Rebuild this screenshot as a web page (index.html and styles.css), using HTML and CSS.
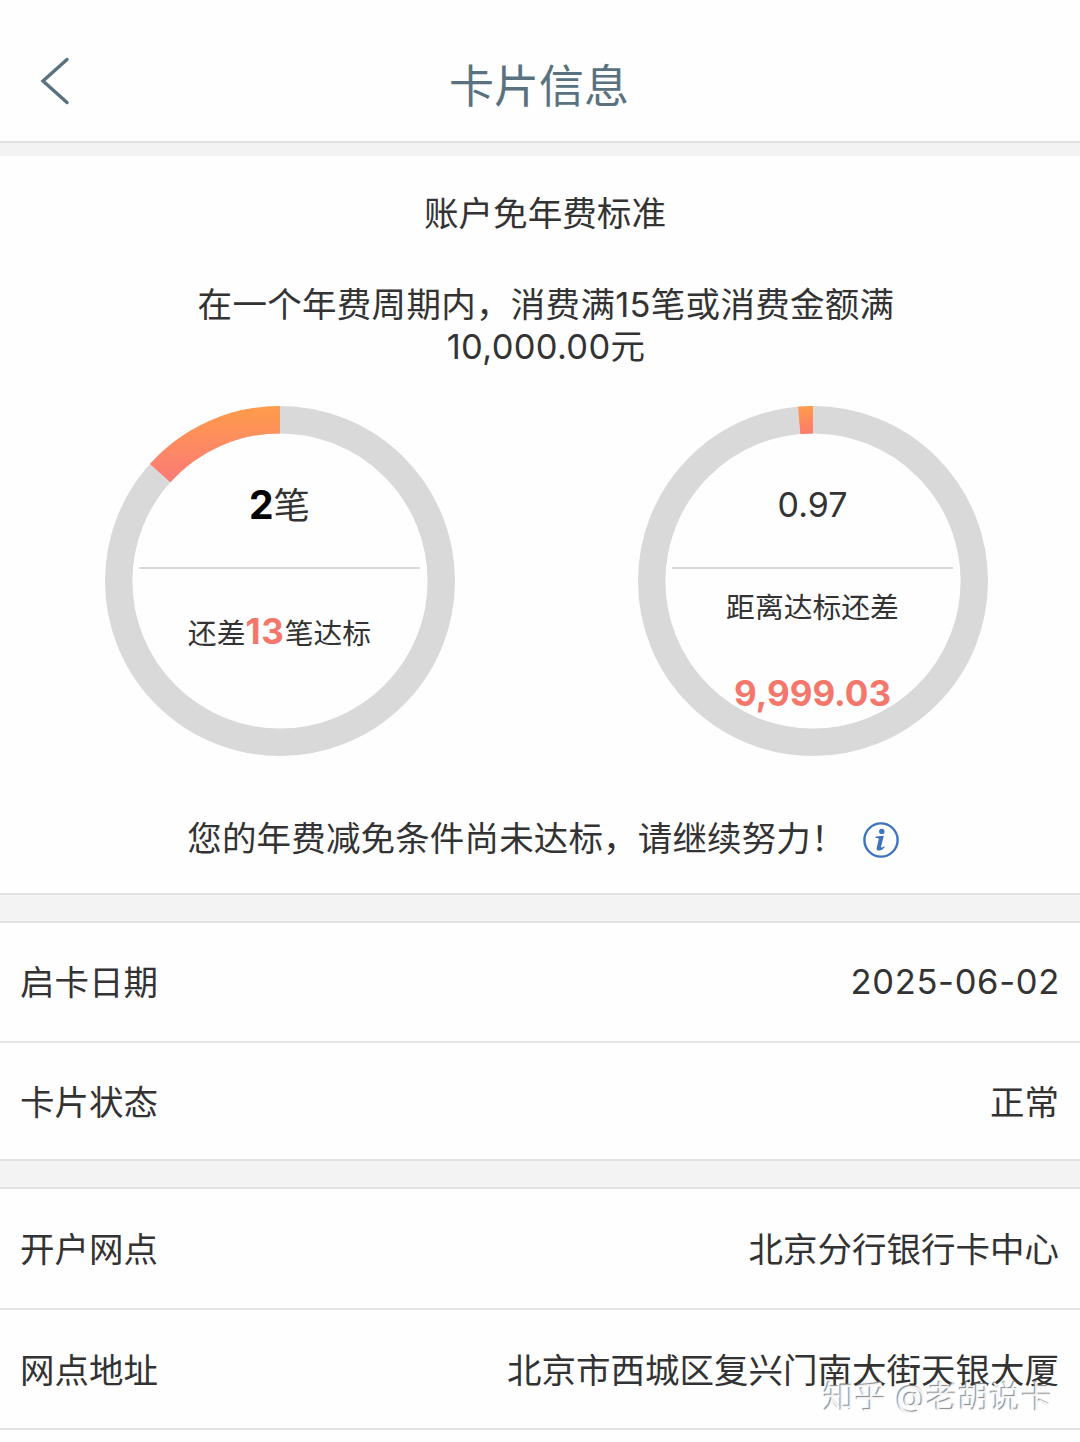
FILE: index.html
```html
<!DOCTYPE html>
<html lang="zh-CN">
<head>
    <meta charset="UTF-8">
    <meta name="viewport" content="width=device-width, initial-scale=1.0">
    <title>卡片信息</title>
    <link rel="stylesheet" href="styles.css">
</head>
<body>
    <header class="header">
        <svg class="back" viewBox="0 0 32 50" width="32" height="50">
            <path d="M28 3.5 L4 25 L28 46.5" fill="none" stroke="#5a727f" stroke-width="3.4" stroke-linecap="round" stroke-linejoin="miter"/>
        </svg>
        <h1>卡片信息</h1>
    </header>

    <section class="fee">
        <h2>账户免年费标准</h2>
        <p class="rule">在一个年费周期内，消费满15笔或消费金额满<br>10,000.00元</p>

        <div class="rings">
            <div class="ring">
                <svg viewBox="0 0 350 350">
                    <defs>
                        <linearGradient id="g1" gradientUnits="userSpaceOnUse" x1="0" y1="0" x2="0" y2="76">
                            <stop offset="0" stop-color="#ff9c4a"/>
                            <stop offset="1" stop-color="#fb7a78"/>
                        </linearGradient>
                    </defs>
                    <circle cx="175" cy="175" r="161.3" fill="none" stroke="#d9d9d9" stroke-width="27.4"/>
                    <path d="M175 13.7 A161.3 161.3 0 0 0 55.1 67.1" fill="none" stroke="url(#g1)" stroke-width="27.4"/>
                </svg>
                <div class="done"><b>2</b>笔</div>
                <div class="left">还差<b>13</b>笔达标</div>
            </div>
            <div class="ring">
                <svg viewBox="0 0 350 350">
                    <defs>
                        <linearGradient id="g2" gradientUnits="userSpaceOnUse" x1="0" y1="0" x2="0" y2="28">
                            <stop offset="0" stop-color="#ff9c4a"/>
                            <stop offset="1" stop-color="#fb7a6c"/>
                        </linearGradient>
                    </defs>
                    <circle cx="175" cy="175" r="161.3" fill="none" stroke="#d9d9d9" stroke-width="27.4"/>
                    <path d="M175 13.7 A161.3 161.3 0 0 0 161.2 14.3" fill="none" stroke="url(#g2)" stroke-width="27.4"/>
                </svg>
                <div class="done amount">0.97</div>
                <div class="left money">距离达标还差<b>9,999.03</b></div>
            </div>
        </div>

        <div class="tip">
            <span>您的年费减免条件尚未达标，请继续努力！</span>
            <svg viewBox="0 0 36 36" width="36" height="36">
                <circle cx="18" cy="18" r="16.6" fill="none" stroke="#3f74bd" stroke-width="2.4"/>
                <circle cx="18.8" cy="9.4" r="2.7" fill="#3f74bd"/>
                <path d="M12.6 14.6 L20.8 13.8 L18 25 Q18.2 26.4 21.4 24.2 L21.8 25.2 Q19 28.6 16 28.6 Q13 28.6 13.8 25.4 L15.8 17 Q15.8 15.8 12.6 16 Z" fill="#3f74bd"/>
            </svg>
        </div>
    </section>

    <section class="list">
        <div class="row"><span>启卡日期</span><span class="date">2025-06-02</span></div>
        <div class="row"><span>卡片状态</span><span>正常</span></div>
    </section>

    <section class="list branch">
        <div class="row"><span>开户网点</span><span>北京分行银行卡中心</span></div>
        <div class="row"><span>网点地址</span><span>北京市西城区复兴门南大街天银大厦</span></div>
    </section>

    <div class="watermark">知乎 @老胡说卡</div>
</body>
</html>
```
FILE: styles.css
```css
* {
    box-sizing: border-box;
}
body {
    position: relative;
    margin: 0;
    height: 1442px;
    overflow: hidden;
    background: #fefefe;
    color: #333;
    font-family: Inter, "Noto Sans CJK SC", sans-serif;
    font-size: 34.5px;
    line-height: 42px;
}
h1, h2, p {
    margin: 0;
    font-weight: 400;
}
.header {
    display: flex;
    align-items: center;
    height: 143px;
    padding: 20px 39px 0;
    border-bottom: 2px solid #e0e0e0;
}
.header h1 {
    flex: 1;
    margin-right: 34px;
    padding-top: 13px;
    color: #5a727f;
    font-size: 45px;
    line-height: 60px;
    text-align: center;
}
.back {
    display: block;
}
.fee {
    height: 752px;
    border-top: 13px solid #f3f3f3;
    border-bottom: 2px solid #e2e2e2;
    text-align: center;
}
.fee h2 {
    padding: 36px 0 0 10px;
    font-size: 34.6px;
}
.rule {
    padding: 50px 0 0 12px;
    letter-spacing: 0.3px;
}
.rings {
    display: flex;
    justify-content: space-between;
    padding: 38px 92px 0 105px;
}
.ring {
    position: relative;
    width: 350px;
    height: 350px;
    padding: 0 35px 0 34px;
}
.ring svg {
    position: absolute;
    left: 0;
    top: 0;
    width: 350px;
    height: 350px;
}
.done {
    position: relative;
    height: 163px;
    padding-top: 78px;
    border-bottom: 2px solid #d9d9d9;
    font-size: 36.5px;
}
.done b {
    color: #000;
    font-size: 39px;
}
.amount {
    font-size: 34px;
}
.left {
    position: relative;
    padding-top: 41px;
    font-size: 28.8px;
}
.left b {
    color: #f4776c;
    font-size: 35px;
}
.left:not(.money) b {
    letter-spacing: 0.8px;
}
.money {
    padding-top: 18px;
}
.money b {
    display: block;
    margin-top: 43px;
}
.tip {
    display: flex;
    justify-content: center;
    align-items: center;
    gap: 17px;
    padding: 62px 0 0 6px;
    letter-spacing: 0.15px;
}
.tip svg {
    margin-top: 2px;
}
.list {
    margin-top: 26px;
    background: #fefefe;
    border-top: 2px solid #e2e2e2;
    border-bottom: 2px solid #e2e2e2;
    box-shadow: 0 -26px #f3f3f3;
}
.row {
    display: flex;
    justify-content: space-between;
    align-items: center;
    height: 118px;
    padding: 2px 21px 0 20px;
}
.row + .row {
    border-top: 2px solid #e4e4e4;
    padding-top: 3px;
}
.date {
    margin: -2px -1px 0 0;
    letter-spacing: 0.7px;
}
.branch .row {
    height: 119px;
}
.branch .row + .row {
    height: 120px;
}
.watermark {
    position: absolute;
    right: 27px;
    bottom: 24px;
    color: rgba(255, 255, 255, 0.9);
    font-size: 31px;
    letter-spacing: 0.6px;
    text-shadow: -1px -1px 1px #888;
}
```
